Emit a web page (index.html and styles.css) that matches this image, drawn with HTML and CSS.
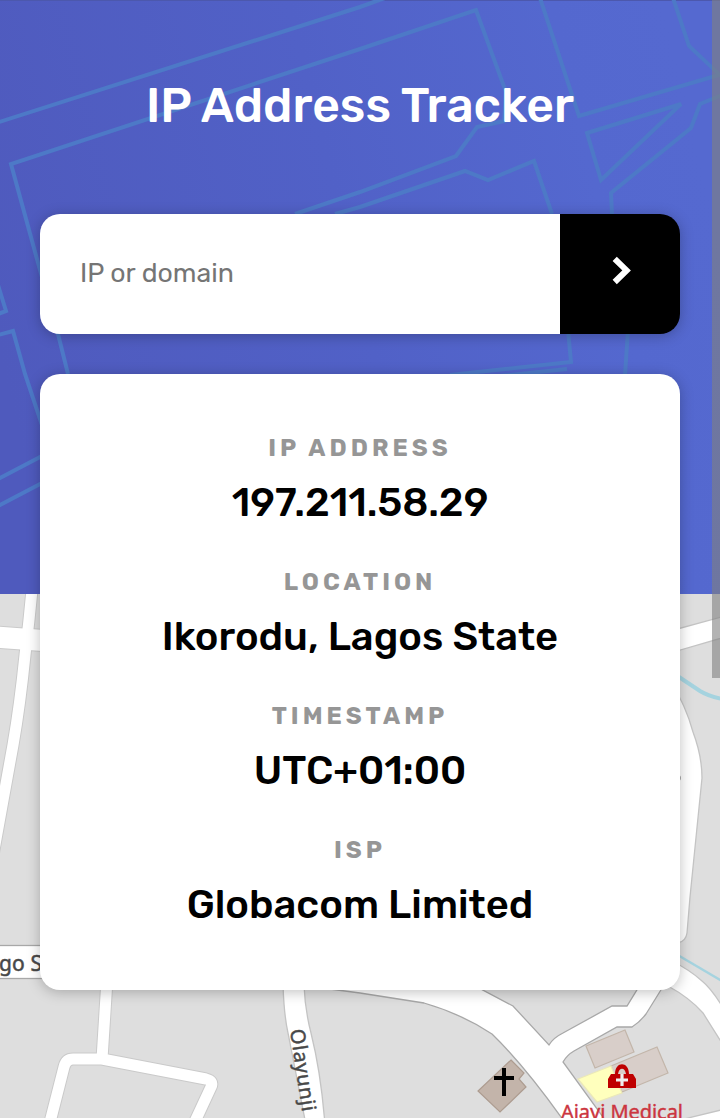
FILE: index.html
```html
<!DOCTYPE html>
<html lang="en">
<head>
<meta charset="utf-8">
<title>IP Address Tracker</title>
<link rel="stylesheet" href="styles.css">
</head>
<body>
<div class="page">
  <svg class="backdrop" viewBox="0 0 720 1118" aria-hidden="true">
    <defs>
      <linearGradient id="sky" x1="0" y1="0.6" x2="1" y2="0.4">
        <stop offset="0" stop-color="#4f5abd"/>
        <stop offset="0.5" stop-color="#5161c7"/>
        <stop offset="0.85" stop-color="#5468cf"/>
        <stop offset="1" stop-color="#5569d0"/>
      </linearGradient>
    </defs>
    <rect class="land" width="720" height="1118"/>
    <g class="roads">
      <path class="case w13" d="M32 590Q29 622 25 655Q20 705 13 745L-10 872"/>
      <path class="case w23" d="M-5 637L50 641"/>
      <path class="road w11" d="M32 590Q29 622 25 655Q20 705 13 745L-10 872"/>
      <path class="road w21" d="M-5 637L50 641"/>
      <path class="area" d="M670 631L725 616V637L670 653Z"/>
      <path class="area" d="M670 680Q686 706 693 732Q702 756 702 778L690 897L687 933Q686 941 678 943H660V690Z"/>
      <circle class="speck" cx="678" cy="778" r="3"/>
      <rect class="area dark" x="-5" y="945.5" width="60" height="33"/>
      <path class="case w12" d="M107 980L102 1059M48 1130L64 1067Q66 1059 73 1059H102L206 1079Q214 1081 211 1087L191 1130"/>
      <path class="road w10" d="M107 980L102 1059M48 1130L64 1067Q66 1059 73 1059H102L206 1079Q214 1081 211 1087L191 1130"/>
      <path class="area" d="M283 985Q284 1015 288 1033L306 1125H325Q321 1073 311 1033Q305 1010 304 985Z"/>
      <path class="area dark" d="M330 989L360 993L424 1003Q462 1014 492 1034Q525 1066 566 1124H608L563 1062Q567 1055 574 1051L617 1027H632Q640 1022 646 1014L664 985H640L627 1006H612L563 1033Q553 1038 549 1045L513 1006L475 986Z"/>
      <path class="area" d="M670 960Q690 970 702 981Q712 989 725 1011V1048L703 1013Q690 998 668 986Z"/>
      <path class="area" d="M680 1120L725 1109V1125H680Z"/>
    </g>
    <g class="water">
      <path class="river" d="M676 675L700 691Q708 696 722 699"/>
      <path class="stream" d="M676 954L722 981"/>
    </g>
    <g class="buildings">
      <path d="M586 1046L625 1030L634 1052L595 1068Z"/>
      <path d="M611 1066L657 1047L668 1073L622 1092Z"/>
      <path class="clinic" d="M578 1079L611 1066L622 1093L597 1102Z"/>
      <path class="church" d="M511 1060L524 1073L519 1079L526 1087L500 1112L478 1091Z"/>
    </g>
    <path class="cross" d="M504 1068V1096M494 1078H514"/>
    <path class="bag" d="M611 1074H615C615 1061 629 1061 629 1074H633L636 1079V1088H608V1079ZM618 1074H626C625 1067 619 1067 618 1074Z" fill-rule="evenodd"/>
    <path class="plus" d="M622 1074V1086M616 1080H628"/>
    <text class="street bold" x="-1" y="971" textLength="43">go S</text>
    <text class="street" transform="translate(290 1030) rotate(81.5)" textLength="83">Olayunji</text>
    <text class="place" x="561" y="1119" textLength="122">Ajayi Medical</text>

    <rect width="720" height="594" fill="url(#sky)"/>
    <rect class="seam" width="720" height="1"/>
    <g class="lines">
      <path d="M-4 123L360 7L385 -2"/>
      <path d="M68 374L58 334L40 270L11 164L360 49L476 10L506 92L504 121L477 127L456 156L360 192L295 214"/>
      <path d="M335 214L360 207L465 171L488 180L534 161L552 214"/>
      <path d="M540 -2L579 116L722 74"/>
      <path d="M673 -2L689 46L722 77"/>
      <path d="M587 133L681 104L601 180Z"/>
      <path d="M722 95L700 104L691 128L611 193L612 214"/>
      <path d="M568 330L571 362L450 375M567 369L500 376M628 330L625 375"/>
      <path d="M-2 285L6 311L-2 314"/>
      <path d="M-2 335L13 331L25 374L42 425"/>
      <path d="M-2 479L42 456M-2 506L42 483"/>
    </g>
  </svg>

  <header class="header">
    <h1 class="title">IP Address Tracker</h1>
    <form class="search">
      <input class="search-input" type="text" placeholder="IP or domain" aria-label="IP or domain">
      <button class="search-button" type="button" aria-label="Search">
        <svg class="chevron" viewBox="0 0 20 30"><path d="M3.7 2.8L15.6 14.4L3.7 26"/></svg>
      </button>
    </form>
  </header>

  <section class="card">
    <div class="item"><h2 class="label">IP ADDRESS</h2><p class="value">197.211.58.29</p></div>
    <div class="item"><h2 class="label">LOCATION</h2><p class="value">Ikorodu, Lagos State</p></div>
    <div class="item"><h2 class="label">TIMESTAMP</h2><p class="value">UTC+01:00</p></div>
    <div class="item"><h2 class="label">ISP</h2><p class="value">Globacom Limited</p></div>
  </section>
  <div class="scrollbar"></div>
</div>
</body>
</html>
```
FILE: styles.css
```css
* { box-sizing: border-box; margin: 0; padding: 0; }
body { font-family: Rubik, Roboto, "Liberation Sans", sans-serif; background: #dedede; }
.page { position: relative; height: 1118px; overflow: hidden; padding: 0 40px; }
.backdrop { position: absolute; inset: 0; width: 720px; height: 1118px; }
.land { fill: #dedede; }
.case, .road { fill: none; stroke-linejoin: round; }
.case { stroke: #cacaca; }
.road { stroke: #fff; }
.w10 { stroke-width: 11; }
.w11 { stroke-width: 11; }
.w12 { stroke-width: 13; }
.w13 { stroke-width: 13; }
.w21 { stroke-width: 21; }
.w23 { stroke-width: 23; }
.area { fill: #fff; stroke: #c4c4c4; stroke-width: 1.3; }
.area.dark { stroke: #a8a8a8; }
.speck { fill: #aaa; }
.river, .stream { fill: none; stroke: #a5d3df; stroke-width: 4; }
.stream { stroke-width: 2.4; }
.buildings path { fill: #d8cec9; stroke: #c3b6aa; stroke-width: 1.2; }
.buildings .clinic { fill: #ffffbd; stroke: #ebe8b8; }
.buildings .church { fill: #c3b4aa; stroke: #ad9c90; }
.cross { fill: none; stroke: #000; stroke-width: 4; }
.bag { fill: #bf0000; }
.plus { stroke: #eee; stroke-width: 3.2; }
.street, .place { font-family: "Noto Sans", sans-serif; font-size: 20px; font-weight: 400; }
.street { fill: #484848; stroke: #484848; stroke-width: 0.5px; }
.street.bold { font-size: 21px; }
.place { fill: #cc3540; stroke: #cc3540; stroke-width: 0.4px; }
.lines { fill: none; stroke: #4d79c7; stroke-width: 4; }
.seam { fill: #4c58ad; }

.header { position: relative; display: flex; flex-direction: column; }
.title { margin-top: 77px; line-height: 57px; font-size: 48px; font-weight: 500; color: #fff; text-align: center; white-space: nowrap; }
.search { display: flex; height: 120px; margin-top: 80px; border-radius: 20px; overflow: hidden; box-shadow: 0 2px 14px rgba(0, 0, 0, 0.25); }
.search-input { flex: 1; min-width: 0; border: 0; outline: 0; background: #fff; padding: 0 40px 2px; font: 400 26.67px Rubik, Roboto, sans-serif; }
.search-input::placeholder { color: #757575; }
.search-button { width: 120px; border: 0; background: #000; display: flex; align-items: center; justify-content: center; padding: 0 0 6px 1px; }
.chevron { width: 20px; height: 30px; fill: none; stroke: #fff; stroke-width: 6; }

.card { position: relative; display: flex; flex-direction: column; gap: 36px; height: 616px; margin-top: 40px; padding-top: 58px; border-radius: 20px; background: #fff; box-shadow: 0 2px 14px rgba(0, 0, 0, 0.25); text-align: center; }
.item { display: flex; flex-direction: column; gap: 16px; height: 98px; }
.label { font-size: 24px; line-height: 32px; font-weight: 700; letter-spacing: 4px; color: #969696; }
.value { font-size: 40px; line-height: 46px; font-weight: 500; color: #000; white-space: nowrap; }
.scrollbar { position: absolute; top: 0; right: 0; width: 8px; height: 678px; background: rgba(128, 128, 128, 0.6); }
```
